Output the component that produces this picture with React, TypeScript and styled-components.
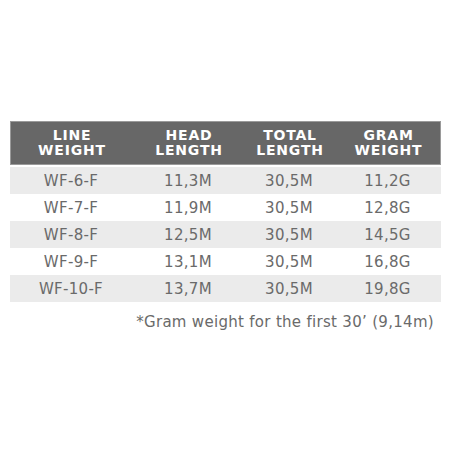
import React, { FC } from 'react'
import styled, { createGlobalStyle } from 'styled-components'

interface Row {
	line: string
	head: string
	total: string
	gram: string
}

const rows: Row[] = [
	{ line: 'WF-6-F', head: '11,3M', total: '30,5M', gram: '11,2G' },
	{ line: 'WF-7-F', head: '11,9M', total: '30,5M', gram: '12,8G' },
	{ line: 'WF-8-F', head: '12,5M', total: '30,5M', gram: '14,5G' },
	{ line: 'WF-9-F', head: '13,1M', total: '30,5M', gram: '16,8G' },
	{ line: 'WF-10-F', head: '13,7M', total: '30,5M', gram: '19,8G' },
]

const columns = '122px 112px 90px 107px'

const App: FC = () => {
	return (
		<>
			<GlobalStyle />
			<StyledPage>
				<StyledTable>
					<StyledHeader>
						<StyledHeadCell>LINE<br />WEIGHT</StyledHeadCell>
						<StyledHeadCell>HEAD<br />LENGTH</StyledHeadCell>
						<StyledHeadCell>TOTAL<br />LENGTH</StyledHeadCell>
						<StyledHeadCell>GRAM<br />WEIGHT</StyledHeadCell>
					</StyledHeader>
					{rows.map((row, i) => (
						<StyledRow key={row.line} $shaded={i % 2 === 0}>
							<StyledCell>{row.line}</StyledCell>
							<StyledCell>{row.head}</StyledCell>
							<StyledCell>{row.total}</StyledCell>
							<StyledCell>{row.gram}</StyledCell>
						</StyledRow>
					))}
				</StyledTable>
				<StyledNote>*Gram weight for the first 30’ (9,14m)</StyledNote>
			</StyledPage>
		</>
	)
}

export default App

const GlobalStyle = createGlobalStyle`
	html, body {
		margin: 0;
		padding: 0;
		background: #fff;
	}
	body {
		font-family: 'DejaVu Sans', 'Liberation Sans', sans-serif;
	}
`

const StyledPage = styled.div`
	width: 452px;
	height: 452px;
	padding: 121px 11px 0 10px;
	box-sizing: border-box;
`

const StyledTable = styled.div`
	display: flex;
	flex-direction: column;
	width: 431px;
`

const StyledHeader = styled.div`
	display: grid;
	grid-template-columns: ${columns};
	height: 44px;
	box-sizing: border-box;
	background: #676767;
	border: 1px solid #9a9a9a;
	margin-bottom: 2px;
	align-items: center;
`

const StyledHeadCell = styled.div`
	color: #fff;
	font-weight: bold;
	font-size: 14px;
	line-height: 15px;
	letter-spacing: 0.8px;
	text-align: center;
`

const StyledRow = styled.div<{ $shaded: boolean }>`
	display: grid;
	grid-template-columns: ${columns};
	height: 27px;
	align-items: center;
	background: ${({ $shaded }) => ($shaded ? '#ebebeb' : '#fff')};
`

const StyledCell = styled.div`
	color: #6a6a6a;
	font-size: 15px;
	text-align: center;
	letter-spacing: 0.3px;
`

const StyledNote = styled.div`
	color: #6a6a6a;
	font-size: 15px;
	text-align: right;
	padding: 11px 7px 0 0;
	letter-spacing: 0.3px;
`
